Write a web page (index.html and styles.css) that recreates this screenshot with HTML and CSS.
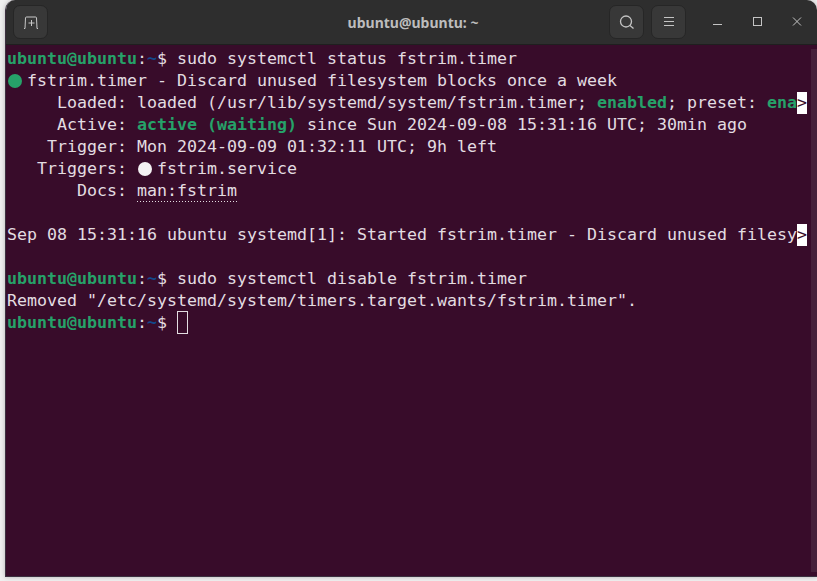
FILE: index.html
```html
<!DOCTYPE html>
<html lang="en">
<head>
<meta charset="utf-8">
<title>ubuntu@ubuntu: ~</title>
<link rel="stylesheet" href="styles.css">
</head>
<body>
<div class="window">
  <header class="titlebar">
    <div class="tb-left">
      <button class="tb-btn" aria-label="New tab">
        <svg width="16" height="16" viewBox="0 0 16 16" fill="none" stroke="#c8c8c8" stroke-width="1"><path d="M1 14.500h1l.5-10.500q0-1 1-1h9q1 0 1 1l.5 10.500h1"/><path d="M8.500 6v6M5.500 9h6"/></svg>
      </button>
    </div>
    <div class="tb-title">ubuntu@ubuntu: ~</div>
    <div class="tb-right">
      <button class="tb-btn" aria-label="Search">
        <svg width="16" height="16" viewBox="0 0 16 16" fill="none" stroke="#c4c4c4" stroke-width="1.300"><circle cx="7" cy="7.500" r="5.500"/><path d="M11 11.500l3.500 3"/></svg>
      </button>
      <button class="tb-btn" aria-label="Menu">
        <svg width="16" height="16" viewBox="0 0 16 16" fill="none" stroke="#c4c4c4" stroke-width="1"><path d="M3 3.500h10M3 7.500h10M3 11.500h10"/></svg>
      </button>
      <div class="win-ctl">
        <svg width="12" height="12" viewBox="0 0 12 12" fill="none" stroke="#c4c4c4" stroke-width="1"><path d="M2 8.500h9"/></svg>
        <svg width="12" height="12" viewBox="0 0 12 12" fill="none" stroke="#c4c4c4" stroke-width="1"><rect x="2.500" y="1.500" width="8" height="8"/></svg>
        <svg width="12" height="12" viewBox="0 0 12 12" fill="none" stroke="#c4c4c4" stroke-width="1"><path d="M2 1.500l8 8M10 1.500l-8 8"/></svg>
      </div>
    </div>
  </header>
  <main class="term">
    <div class="line"><b class="pr">ubuntu@ubuntu</b>:<b class="pa">~</b>$ sudo systemctl status fstrim.timer</div>
    <div class="line"><span class="dot green"></span> fstrim.timer - Discard unused filesystem blocks once a week</div>
    <div class="line">     Loaded: loaded (/usr/lib/systemd/system/fstrim.timer; <b class="gb">enabled</b>; preset: <b class="gb">ena</b><span class="more">&gt;</span></div>
    <div class="line">     Active: <b class="gb">active (waiting)</b> since Sun 2024-09-08 15:31:16 UTC; 30min ago</div>
    <div class="line">    Trigger: Mon 2024-09-09 01:32:11 UTC; 9h left</div>
    <div class="line">   Triggers: <span class="dot white"></span> fstrim.service</div>
    <div class="line">       Docs: <span class="link">man:fstrim</span></div>
    <div class="line"> </div>
    <div class="line">Sep 08 15:31:16 ubuntu systemd[1]: Started fstrim.timer - Discard unused filesy<span class="more">&gt;</span></div>
    <div class="line"> </div>
    <div class="line"><b class="pr">ubuntu@ubuntu</b>:<b class="pa">~</b>$ sudo systemctl disable fstrim.timer</div>
    <div class="line">Removed "/etc/systemd/system/timers.target.wants/fstrim.timer".</div>
    <div class="line"><b class="pr">ubuntu@ubuntu</b>:<b class="pa">~</b>$ <span class="cursor"></span></div>
    <div class="scrollbar"></div>
  </main>
</div>
</body>
</html>
```
FILE: styles.css
```css
* { box-sizing: border-box; }
html, body { margin: 0; height: 100%; background: #f0f0f0; overflow: hidden; }
body { padding: 0 0 4px 5px; }
.window {
  height: 577px;
  width: 812px;
  display: flex;
  flex-direction: column;
  border-radius: 10px 10px 0 0;
  overflow: hidden;
  box-shadow: 0 0 5px rgba(0,0,0,.25);
  border-left: 1px solid #3c3040;
  border-bottom: 1px solid #3c3040;
}
.titlebar {
  height: 45px;
  flex: none;
  background: #2e2e2e;
  border-bottom: 1px solid #1f1f1f;
  display: flex;
  align-items: center;
  padding: 0 0 0 7px;
}
.tb-left { flex: 1; display: flex; }
.tb-right { flex: 1; display: flex; justify-content: flex-end; align-items: center; gap: 7px; }
.tb-title {
  font: bold 14px "Noto Sans", "Liberation Sans", sans-serif;
  color: #bdbdbd;
  margin-left: -4px;
}
.tb-btn {
  width: 35px;
  height: 34px;
  padding: 0;
  border: 1px solid #262626;
  border-radius: 7px;
  background: #383838;
  display: flex;
  align-items: center;
  justify-content: center;
}
.win-ctl { display: flex; gap: 28px; padding: 0 14px 0 18px; }
.term {
  flex: 1;
  background: #380c2a;
  padding: 3px 0 0 1px;
  position: relative;
  color: #e3dde1;
  font: 16.625px/22px "DejaVu Sans Mono", monospace;
}
.line { height: 22px; white-space: pre; }
b { font-weight: bold; }
.pr { color: #26a269; }
.pa { color: #12488b; }
.gb { color: #26a269; }
.dot {
  display: inline-block;
  width: 14px;
  height: 14px;
  border-radius: 50%;
  vertical-align: -2px;
  margin: 0 -5px 0 1px;
}
.green { background: #26a269; }
.white { background: #f4f1f3; }
.more {
  display: inline-block;
  height: 22px;
  vertical-align: top;
  background: #fff;
  color: #380c2a;
}
.link {
  display: inline-block;
  height: 22px;
  vertical-align: top;
  background: repeating-linear-gradient(90deg, #e3dde1 0 1px, transparent 1px 3px) 0 100% / 100% 1px no-repeat;
}
.cursor {
  display: inline-block;
  width: 11px;
  height: 23px;
  margin-top: -1px;
  border: 1px solid #e3dde1;
  vertical-align: top;
}
.scrollbar {
  position: absolute;
  top: 4px;
  right: 0;
  bottom: 4px;
  width: 6px;
  background: #46203a;
}
```
